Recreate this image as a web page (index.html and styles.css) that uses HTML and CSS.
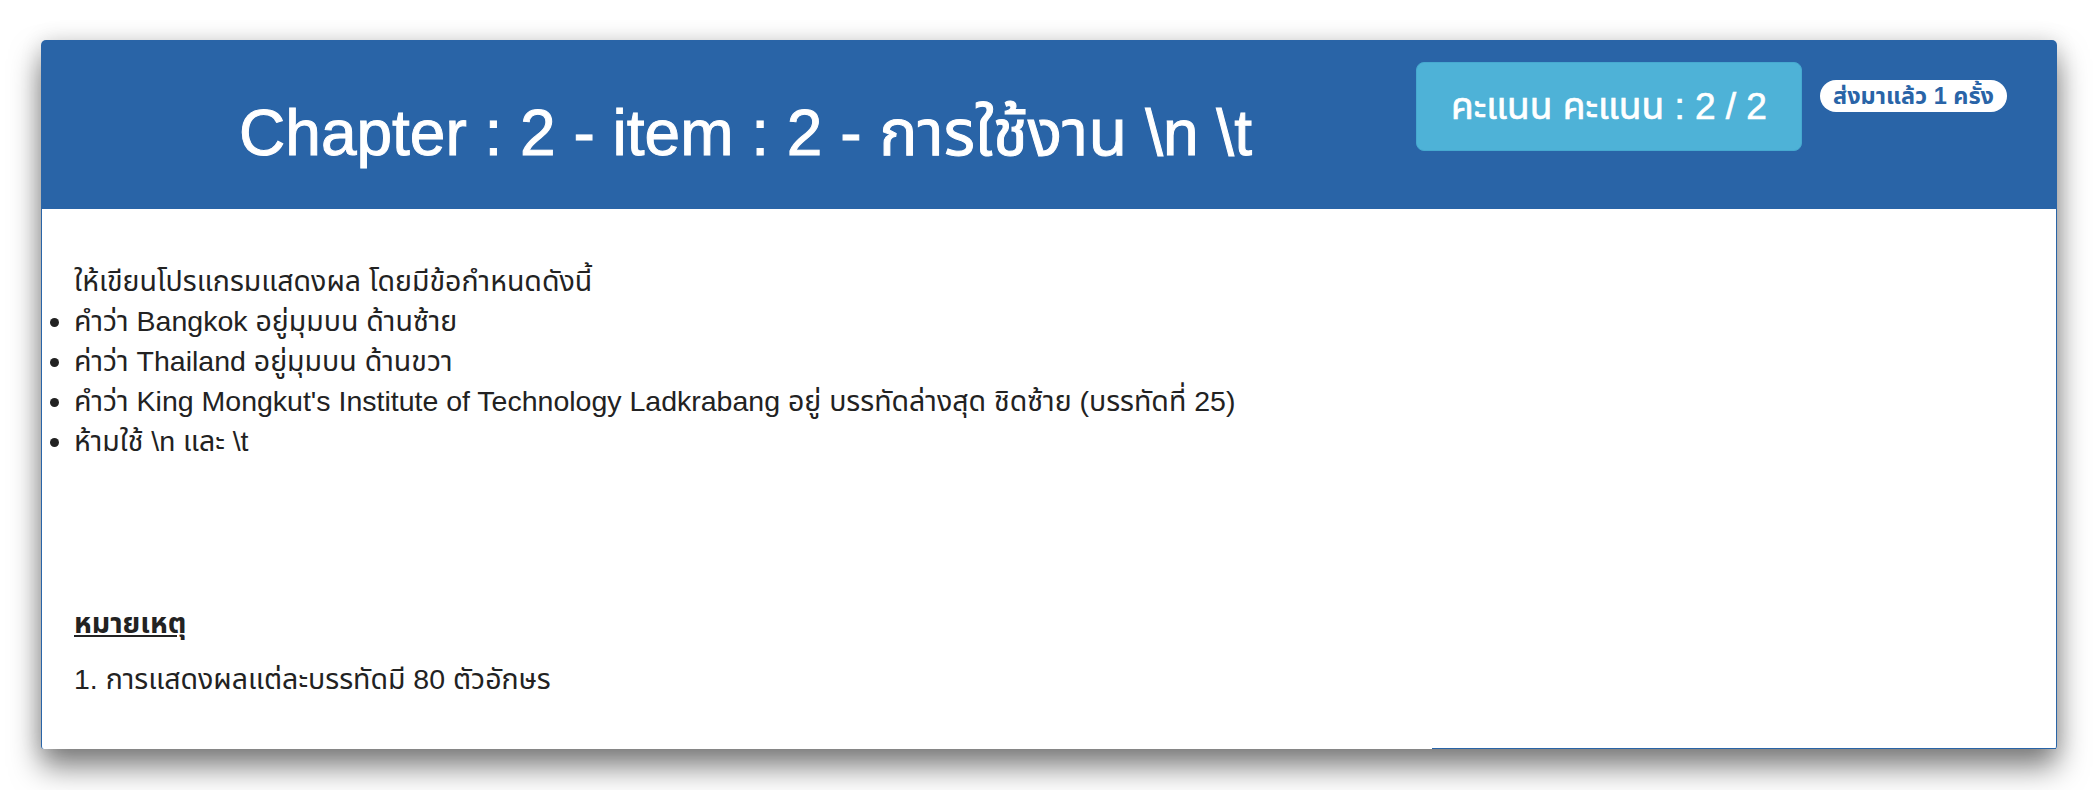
FILE: index.html
```
<!DOCTYPE html>
<html lang="th">
<head>
<meta charset="utf-8">
<title>Chapter 2 - item 2</title>
<link rel="stylesheet" href="styles.css">
</head>
<body>
<div class="card">
  <div class="card-header">
    <div class="title-col">
      <h1 class="title">Chapter : 2 - item : 2 - การใช้งาน \n \t</h1>
    </div>
    <div class="score-btn">คะแนน คะแนน : 2 / 2</div>
    <span class="badge">ส่งมาแล้ว 1 ครั้ง</span>
  </div>
  <div class="card-body">
    <div class="body-main">
      <p class="intro">ให้เขียนโปรแกรมแสดงผล โดยมีข้อกำหนดดังนี้</p>
      <ul class="rules">
        <li>คำว่า Bangkok อยู่มุมบน ด้านซ้าย</li>
        <li>ค่าว่า Thailand อยู่มุมบน ด้านขวา</li>
        <li>คำว่า King Mongkut's Institute of Technology Ladkrabang อยู่ บรรทัดล่างสุด ชิดซ้าย (บรรทัดที่ 25)</li>
        <li>ห้ามใช้ \n และ \t</li>
      </ul>
      <p class="note-title">หมายเหตุ</p>
      <p class="note">1. การแสดงผลแต่ละบรรทัดมี 80 ตัวอักษร</p>
    </div>
    <div class="body-side"></div>
  </div>
</div>
</body>
</html>
```
FILE: styles.css
```
html, body {
  margin: 0;
  padding: 0;
  background: #ffffff;
}
body {
  font-family: "Liberation Sans", Arial, "Noto Sans Thai", "Loma", "Garuda", sans-serif;
  color: #222222;
  padding: 40px 41px 42px 41px;
  min-height: 708px;
}
.card {
  width: 2016px;
  background: #ffffff;
  border-radius: 5px 5px 3px 3px;
  box-shadow: 0 18px 30px rgba(0, 0, 0, 0.5), 0 0 22px rgba(0, 0, 0, 0.12);
}
.card-header {
  display: flex;
  align-items: flex-start;
  height: 169px;
  background: #2964a7;
  border-radius: 5px 5px 0 0;
}
.title-col {
  width: 1341px;
  padding-left: 34px;
  text-align: center;
}
.title {
  margin: 57px 0 0 0;
  font-size: 64px;
  line-height: 72px;
  font-weight: normal;
  color: #ffffff;
  -webkit-text-stroke: 1px #ffffff;
  white-space: pre;
}
.score-btn {
  margin-top: 22px;
  width: 384px;
  height: 87px;
  background: #4eb2d7;
  border: 1px solid #46a9d0;
  border-radius: 8px;
  color: #ffffff;
  font-size: 37px;
  line-height: 87px;
  text-align: center;
  -webkit-text-stroke: 0.7px #ffffff;
}
.badge {
  margin: 40px 0 0 18px;
  height: 32px;
  padding: 0 13px;
  background: #ffffff;
  border-radius: 16px;
  color: #2964a7;
  font-size: 23.5px;
  font-weight: bold;
  line-height: 32px;
}
.card-body {
  display: flex;
  border-left: 1px solid #2964a7;
  border-right: 1px solid #2964a7;
  border-radius: 0 0 3px 3px;
}
.body-main {
  width: 1358px;
  padding: 52px 0 50px 32px;
  font-size: 28.5px;
  line-height: 40px;
}
.body-side {
  flex: 1;
  border-bottom: 1px solid #2964a7;
}
.intro {
  margin: 0;
}
.rules {
  margin: 0;
  padding: 0;
  list-style: disc outside;
  white-space: nowrap;
}
.note-title {
  margin: 142px 0 0 0;
  font-weight: bold;
  text-decoration: underline;
}
.note {
  margin: 16px 0 0 0;
}
```
